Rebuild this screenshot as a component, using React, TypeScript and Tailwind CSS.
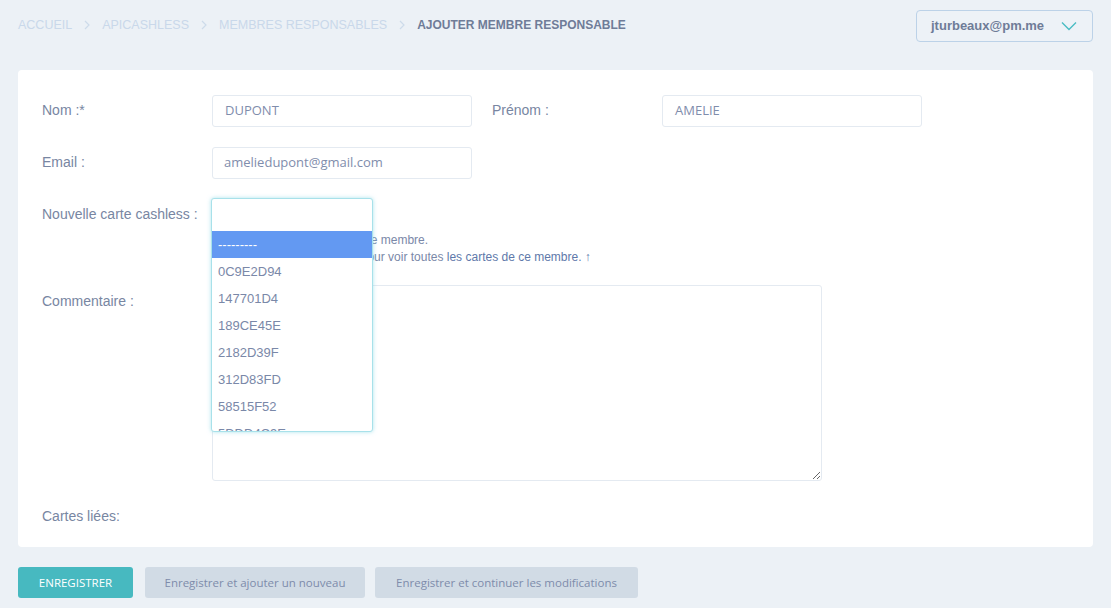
import React from "react";

const sans = { fontFamily: '"Liberation Sans", Arial, sans-serif' };

function Chevron() {
  return (
    <svg width="8" height="12" viewBox="0 0 8 12" className="mx-[11px]">
      <path d="M2 2 L6 6 L2 10" fill="none" stroke="#cddbea" strokeWidth="1.2" />
    </svg>
  );
}

export default function App() {
  const options = ["0C9E2D94", "147701D4", "189CE45E", "2182D39F", "312D83FD", "58515F52", "5DDD4C9E"];
  return (
    <div className="min-h-[608px] w-[1111px] bg-[#ecf1f6] px-[18px] pt-[10px]" style={sans}>
      {/* header */}
      <div className="flex h-[32px] items-center justify-between">
        <div className="flex items-center text-[12.5px] leading-none -mt-[2px]">
          <span className="text-[#c9d8ea]">ACCUEIL</span>
          <Chevron />
          <span className="text-[#c9d8ea]">APICASHLESS</span>
          <Chevron />
          <span className="text-[#c9d8ea]">MEMBRES RESPONSABLES</span>
          <Chevron />
          <span className="font-bold text-[12px] text-[#6f7c98]">AJOUTER MEMBRE RESPONSABLE</span>
        </div>
        <div className="flex h-[32px] w-[177px] items-center justify-between rounded-[4px] border border-[#bcd2e8] bg-[#edf2f7] pl-[14px] pr-[15px]">
          <span className="text-[13px] font-bold text-[#6f7c98]">jturbeaux@pm.me</span>
          <svg width="16" height="10" viewBox="0 0 16 10">
            <path d="M1 1.5 L8 8.5 L15 1.5" fill="none" stroke="#4bbcc4" strokeWidth="1.4" />
          </svg>
        </div>
      </div>

      {/* card */}
      <div className="mt-[28px] rounded-[4px] bg-white pl-[24px] pt-[25px] pb-[15px] text-[14px] text-[#7886a2]">
        {/* Nom / Prénom */}
        <div className="flex items-start">
          <div className="flex h-[32px] w-[170px] items-center -mt-[1px]">Nom :*</div>
          <div
            className="flex h-[32px] w-[260px] items-center rounded-[3px] border border-[#e4eaf1] px-[12px] text-[13px] text-[#7f8dac]"
            style={{ fontFamily: '"Open Sans", sans-serif' }}
          >
            DUPONT
          </div>
          <div className="ml-[20px] flex h-[32px] w-[170px] items-center -mt-[1px]">Prénom :</div>
          <div
            className="flex h-[32px] w-[260px] items-center rounded-[3px] border border-[#e4eaf1] px-[12px] text-[13px] text-[#7f8dac]"
            style={{ fontFamily: '"Open Sans", sans-serif' }}
          >
            AMELIE
          </div>
        </div>

        {/* Email */}
        <div className="mt-[20px] flex items-start">
          <div className="flex h-[32px] w-[170px] items-center -mt-[1px]">Email :</div>
          <div
            className="flex h-[32px] w-[260px] items-center rounded-[3px] border border-[#e4eaf1] px-[11px] text-[13px] text-[#7f8dac]"
            style={{ fontFamily: '"Open Sans", sans-serif' }}
          >
            ameliedupont@gmail.com
          </div>
        </div>

        {/* Nouvelle carte */}
        <div className="mt-[19px] flex items-start">
          <div className="flex h-[33px] w-[169px] items-center">Nouvelle carte cashless :</div>
          <div className="flex flex-col">
            <div className="relative h-[33px] w-[162px]">
              <div className="absolute left-0 top-0 z-10 w-[162px] overflow-hidden rounded-[3px] border border-[#a8e1ea] bg-white shadow-[0_0_4px_rgba(120,210,225,0.6)]">
                <div className="h-[32px]" />
                <div className="h-[200px] overflow-hidden text-[13px] text-[#7a88a8]">
                  <div className="flex h-[27px] items-center bg-[#6399f2] pl-[6px] text-white">---------</div>
                  {options.map((o) => (
                    <div key={o} className="flex h-[27px] items-center pl-[6px]">
                      {o}
                    </div>
                  ))}
                </div>
              </div>
            </div>
            <div className="mt-[1px] pl-[1px] text-[12px] leading-[17px] text-[#7a88a8]">
              <div>Sélectionnez une carte pour ce membre.</div>
              <div>
                Cliquez sur les Cartes liées pour voir toutes{" "}
                <span className="text-[#6079aa]">les cartes de ce membre. ↑</span>
              </div>
            </div>
          </div>
        </div>

        {/* Commentaire */}
        <div className="mt-[19px] flex items-start">
          <div className="flex h-[32px] w-[170px] items-center">Commentaire :</div>
          <textarea className="h-[196px] w-[610px] rounded-[3px] border border-[#e4eaf1] outline-none" defaultValue="" />
        </div>

        {/* Cartes liées */}
        <div className="mt-[19px] flex h-[32px] items-center">Cartes liées:</div>
      </div>

      {/* buttons */}
      <div className="mt-[20px] flex gap-[10px] text-[12px]" style={{ fontFamily: '"Open Sans", sans-serif' }}>
        <button className="h-[31px] w-[115px] rounded-[3px] bg-[#47b9c0] text-[11.5px] text-white">ENREGISTRER</button>
        <button className="ml-[2px] h-[31px] w-[220px] rounded-[3px] bg-[#d1dbe5] text-[11.5px] text-[#7e8cab]">
          Enregistrer et ajouter un nouveau
        </button>
        <button className="h-[31px] w-[263px] rounded-[3px] bg-[#d1dbe5] text-[11.5px] text-[#7e8cab]">
          Enregistrer et continuer les modifications
        </button>
      </div>
    </div>
  );
}
